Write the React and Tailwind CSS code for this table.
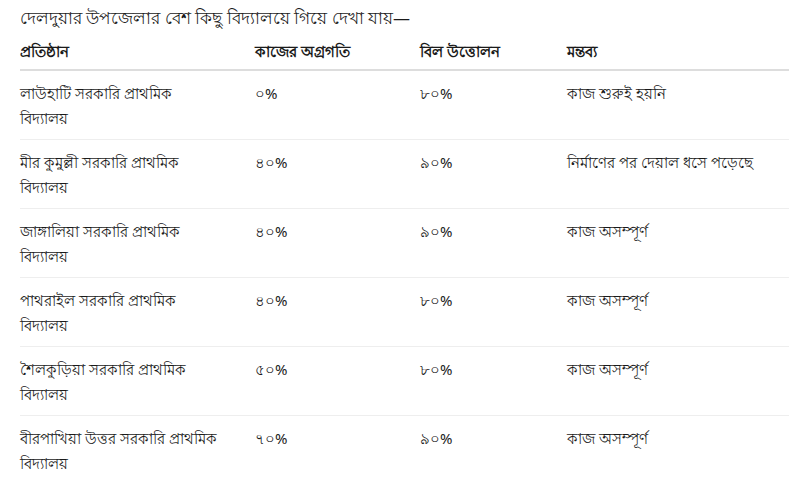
const rows = [
  ['লাউহাটি সরকারি প্রাথমিক বিদ্যালয়', '০%', '৮০%', 'কাজ শুরুই হয়নি'],
  ['মীর কুমুল্লী সরকারি প্রাথমিক বিদ্যালয়', '৪০%', '৯০%', 'নির্মাণের পর দেয়াল ধসে পড়েছে'],
  ['জাঙ্গালিয়া সরকারি প্রাথমিক বিদ্যালয়', '৪০%', '৯০%', 'কাজ অসম্পূর্ণ'],
  ['পাথরাইল সরকারি প্রাথমিক বিদ্যালয়', '৪০%', '৮০%', 'কাজ অসম্পূর্ণ'],
  ['শৈলকুড়িয়া সরকারি প্রাথমিক বিদ্যালয়', '৫০%', '৮০%', 'কাজ অসম্পূর্ণ'],
  ['বীরপাখিয়া উত্তর সরকারি প্রাথমিক বিদ্যালয়', '৭০%', '৯০%', 'কাজ অসম্পূর্ণ'],
]

export default function App() {
  return (
    <div className="w-[802px] h-[486px] overflow-hidden bg-white px-5 text-[#1a1a1a] font-['Noto_Sans',sans-serif]">
      <p className="pt-[5px] text-[17px] leading-[26px]">দেলদুয়ার উপজেলার বেশ কিছু বিদ্যালয়ে গিয়ে দেখা যায়—</p>

      <div className="w-[769px]">
        <div className="grid grid-cols-[235px_165px_147px_222px] border-b-2 border-[#ddd] pt-[8px] pb-[6px] text-[15px] font-bold leading-[24px]">
          <div>প্রতিষ্ঠান</div>
          <div>কাজের অগ্রগতি</div>
          <div>বিল উত্তোলন</div>
          <div>মন্তব্য</div>
        </div>

        {rows.map((r, i) => (
          <div
            key={i}
            className="grid grid-cols-[235px_165px_147px_222px] border-b border-[#eee] last:border-b-0 pt-[10px] pb-[8px] text-[15px] leading-[25px]"
          >
            <div className="pr-8">{r[0]}</div>
            <div>{r[1]}</div>
            <div>{r[2]}</div>
            <div>{r[3]}</div>
          </div>
        ))}
      </div>
    </div>
  )
}
